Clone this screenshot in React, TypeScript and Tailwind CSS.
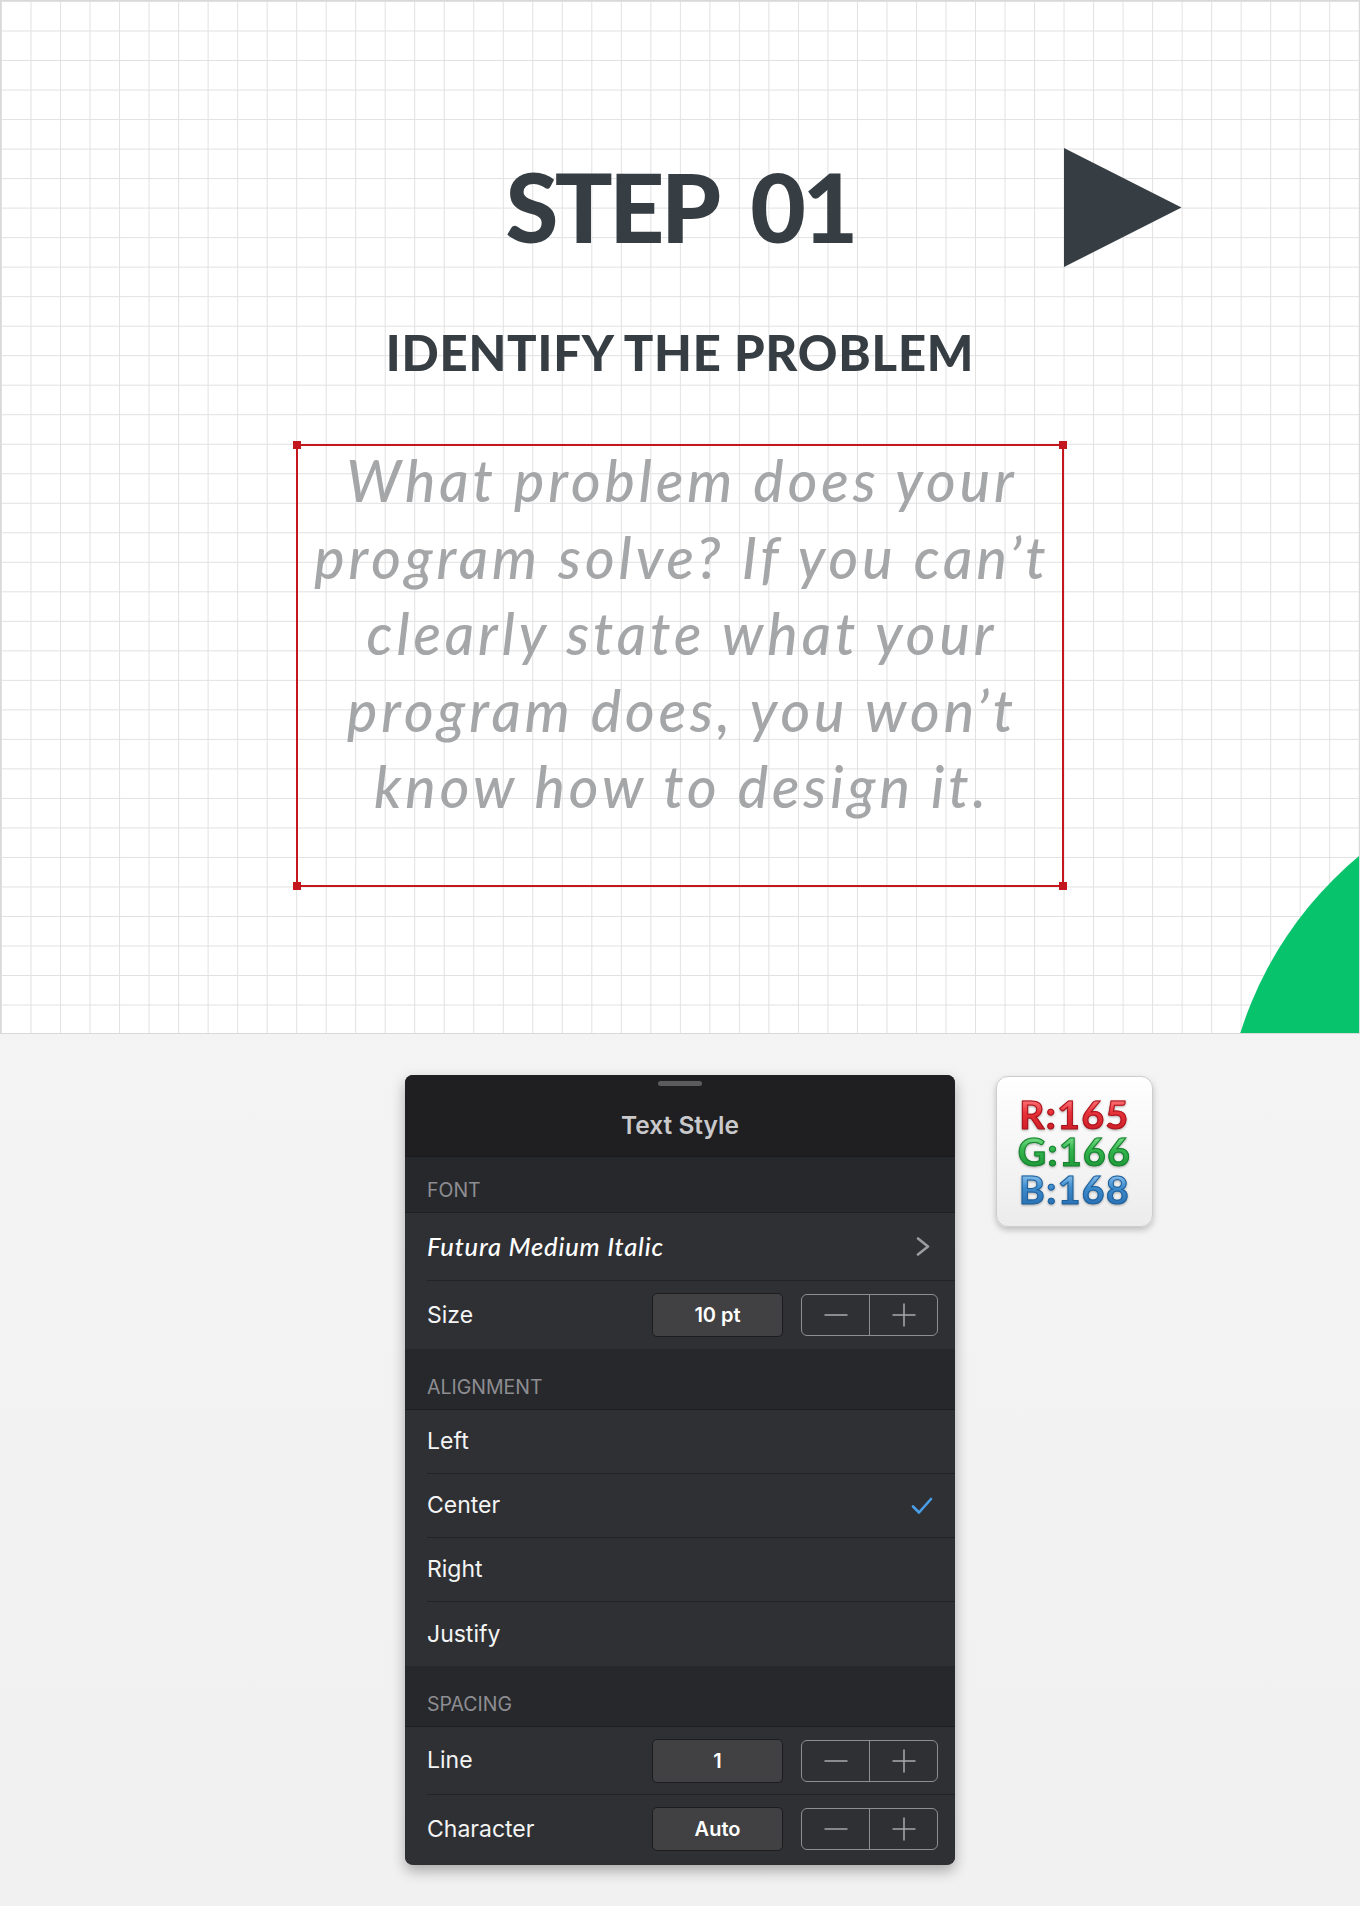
import React from "react";

const lato = "font-['Lato',sans-serif]";
const inter = "font-['Inter',sans-serif]";

function Stepper() {
	return (
		<div className="w-[137px] h-[42px] border border-[#8e8e92] rounded-[6px] flex">
			<div className="flex-1 flex items-center justify-center">
				<svg width="24" height="4" viewBox="0 0 24 4">
					<line x1="0.5" y1="2" x2="23.5" y2="2" stroke="#a4a4a8" strokeWidth="1.6" />
				</svg>
			</div>
			<div className="flex-1 flex items-center justify-center border-l border-[#8e8e92]">
				<svg width="24" height="24" viewBox="0 0 24 24">
					<line x1="0.5" y1="12" x2="23.5" y2="12" stroke="#a4a4a8" strokeWidth="1.6" />
					<line x1="12" y1="0.5" x2="12" y2="23.5" stroke="#a4a4a8" strokeWidth="1.6" />
				</svg>
			</div>
		</div>
	);
}

function ValueBox({ value }: { value: string }) {
	return (
		<div className="w-[131px] h-[44px] bg-[#414143] border border-[#1c1c1e] rounded-[5px] flex items-center justify-center text-[20px] font-semibold text-white">
			{value}
		</div>
	);
}

function SectionHeader({ label, top }: { label: string; top: string }) {
	return (
		<div
			className={`${top} pb-[10px] pl-[22px] bg-[#27282b] border-b border-[#1e1f22] text-[19.5px] leading-[24px] text-[#8d8d92]`}>
			{label}
		</div>
	);
}

function Row({
	children,
	last,
	h = "h-[68px]",
}: {
	children: React.ReactNode;
	last?: boolean;
	h?: string;
}) {
	return (
		<div className="pl-[22px] bg-[#2f3034]">
			<div
				className={`${h} flex items-center pr-[17px] ${last ? "" : "border-b border-[#222326]"}`}>
				{children}
			</div>
		</div>
	);
}

function StepRow({ label, value, last }: { label: string; value: string; last?: boolean }) {
	return (
		<Row last={last}>
			<span className="flex-1 text-[23px] text-[#f4f4f5]">{label}</span>
			<ValueBox value={value} />
			<div className="w-[18px]" />
			<Stepper />
		</Row>
	);
}

function BadgeLine({ text, grad, stroke }: { text: string; grad: string; stroke: string }) {
	return (
		<div className="h-[37.5px] flex items-center">
			<span
				className={`${grad} ${stroke} bg-clip-text text-transparent drop-shadow-[0_1px_1px_rgba(0,0,0,0.3)]`}>
				{text}
			</span>
		</div>
	);
}

export default function App() {
	return (
		<div className="w-[1360px] min-h-[1906px] bg-[linear-gradient(to_bottom,#f6f6f6,#f1f1f1)]">
			{/* Slide canvas */}
			<div className="relative h-[1034px] overflow-hidden border border-[#d9d9d9] bg-white bg-[linear-gradient(to_right,#e1e1e1_1px,transparent_1px),linear-gradient(to_bottom,#e1e1e1_1px,transparent_1px)] bg-[length:29.53px_29.53px]">
				<div className="absolute left-[1222px] top-[768px] w-[754px] h-[754px] rounded-full bg-[#07c36c]" />
				<svg
					className="absolute left-[1063px] top-[147px]"
					width="118"
					height="119"
					viewBox="0 0 118 119">
					<polygon points="0,0 117.5,59.5 0,119" fill="#363e44" />
				</svg>

				<div className="relative flex flex-col items-center pt-[157px]">
					<h1
						className={`${lato} font-black text-[96px] leading-[96px] tracking-[-3.5px] [word-spacing:16px] text-[#363e44]`}>
						STEP 01
					</h1>
					<h2
						className={`${lato} font-black text-[49px] leading-[49px] tracking-[0.8px] text-[#363e44] mt-[74px]`}>
						IDENTIFY THE PROBLEM
					</h2>

					<div className="relative mt-[67px] w-[768px] h-[443px] border-2 border-[#c3161d]">
						<span className="absolute -top-[5px] -left-[5px] w-[8px] h-[8px] bg-[#c3161d]" />
						<span className="absolute -top-[5px] -right-[5px] w-[8px] h-[8px] bg-[#c3161d]" />
						<span className="absolute -bottom-[5px] -left-[5px] w-[8px] h-[8px] bg-[#c3161d]" />
						<span className="absolute -bottom-[5px] -right-[5px] w-[8px] h-[8px] bg-[#c3161d]" />
						<p
							className={`${lato} italic font-medium text-[57px] leading-[76.5px] tracking-[4px] text-center text-[#a5a6a8] -mt-[4px] -mx-[20px] pl-[4px]`}>
							What problem does your
							<br />
							program solve? If you can’t
							<br />
							clearly state what your
							<br />
							program does, you won’t
							<br />
							know how to design it.
						</p>
					</div>
				</div>
			</div>

			{/* Inspector + colour readout */}
			<div className="flex items-start pl-[405px] pt-[41px] gap-[41px]">
				<div
					className={`${inter} w-[550px] rounded-[8px] overflow-hidden bg-[#2f3034] shadow-[0_6px_14px_rgba(0,0,0,0.3)]`}>
					<div className="h-[82px] bg-[#1f1f21] flex flex-col items-center pt-[6px] border-b border-[#1a1a1c]">
						<div className="w-[44px] h-[5px] rounded-full bg-[#5b5b5e]" />
						<div className="mt-[24px] text-[24.5px] leading-[30px] font-semibold text-[#c9c9cc]">
							Text Style
						</div>
					</div>

					<SectionHeader label="FONT" top="pt-[21px]" />
					<Row>
						<span
							className={`${lato} italic font-medium flex-1 text-[25.5px] tracking-[0.8px] text-white`}>
							Futura Medium Italic
						</span>
						<svg className="mr-[8px]" width="14" height="19" viewBox="0 0 14 19">
							<polyline
								points="2,1.5 12,9.5 2,17.5"
								fill="none"
								stroke="#9b9ba0"
								strokeWidth="2.6"
								strokeLinecap="round"
								strokeLinejoin="round"
							/>
						</svg>
					</Row>
					<StepRow label="Size" value="10 pt" last />

					<SectionHeader label="ALIGNMENT" top="pt-[26px]" />
					<Row h="h-[64px]">
						<span className="text-[23px] text-[#f4f4f5]">Left</span>
					</Row>
					<Row h="h-[64px]">
						<span className="flex-1 text-[23px] text-[#f4f4f5]">Center</span>
						<svg className="mr-[5px]" width="22" height="18" viewBox="0 0 22 18">
							<polyline
								points="2,9.5 8,15.5 20,2"
								fill="none"
								stroke="#4a9ee8"
								strokeWidth="2.6"
								strokeLinecap="round"
								strokeLinejoin="round"
							/>
						</svg>
					</Row>
					<Row h="h-[64px]">
						<span className="text-[23px] text-[#f4f4f5]">Right</span>
					</Row>
					<Row h="h-[64px]" last>
						<span className="text-[23px] text-[#f4f4f5]">Justify</span>
					</Row>

					<SectionHeader label="SPACING" top="pt-[26px]" />
					<StepRow label="Line" value="1" />
					<StepRow label="Character" value="Auto" last />
					<div className="h-[2px]" />
				</div>

				<div
					className={`${lato} w-[157px] h-[151px] mt-[1px] rounded-[12px] border border-[#cdcdcd] bg-[linear-gradient(to_bottom,#ffffff,#ececec)] shadow-[0_3px_6px_rgba(0,0,0,0.22)] flex flex-col items-center pt-[18px] font-bold text-[39px] leading-[30px] tracking-[1.5px]`}>
					<BadgeLine
						text="R:165"
						grad="bg-[linear-gradient(to_bottom,#ff7a7e,#e8323a_45%,#cf1f28)]"
						stroke="[-webkit-text-stroke:1px_#a8141c]"
					/>
					<BadgeLine
						text="G:166"
						grad="bg-[linear-gradient(to_bottom,#7fe28f,#34b54e_45%,#1f9a3a)]"
						stroke="[-webkit-text-stroke:1px_#17802e]"
					/>
					<BadgeLine
						text="B:168"
						grad="bg-[linear-gradient(to_bottom,#8ec3f0,#3d8ccd_45%,#2a72b5)]"
						stroke="[-webkit-text-stroke:1px_#1f5f99]"
					/>
				</div>
			</div>
		</div>
	);
}
